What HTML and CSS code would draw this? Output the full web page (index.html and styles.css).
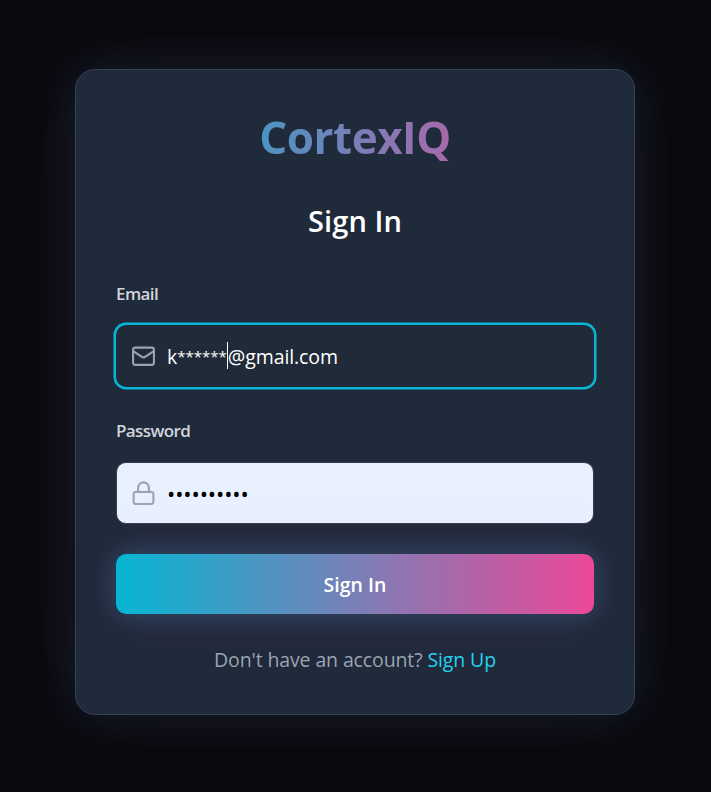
FILE: index.html
```html
<!DOCTYPE html>
<html lang="en">
<head>
  <meta charset="UTF-8" />
  <title>CortexIQ - Sign In</title>
  <link rel="stylesheet" href="styles.css">
</head>
<body>
  <main class="card">
    <h1 class="brand"><span>CortexIQ</span></h1>
    <h2 class="heading"><span>Sign In</span></h2>

    <div class="label">Email</div>
    <div class="field focused">
      <svg class="icon" viewBox="0 0 24 24">
        <rect x="2" y="3.5" width="20" height="16.5" rx="2" />
        <path d="m2.5 7 7.6 5.2a3.4 3.4 0 0 0 3.8 0L21.5 7" />
      </svg>
      <div class="value"><span>k<span class="stars">******</span></span><span class="caret"></span><span class="domain">@gmail.com</span></div>
    </div>

    <div class="label">Password</div>
    <div class="field filled">
      <svg class="icon" viewBox="0 0 24 24">
        <rect x="2.5" y="10.5" width="19" height="11.5" rx="2" />
        <path d="M6.8 10.5V6.5a5.2 5.2 0 0 1 10.4 0v4" />
      </svg>
      <div class="dots">••••••••••</div>
    </div>

    <button class="submit"><span>Sign In</span></button>
    <p class="footer"><span class="ask">Don't have an account?</span> <a class="link">Sign Up</a></p>
  </main>
</body>
</html>
```

FILE: styles.css
```css
* {
  box-sizing: border-box;
}

body {
  margin: 0;
  height: 792px;
  padding: 69px 76px 0 75px;
  background-color: #0a0a0f;
  color: #fff;
  font-family: 'Open Sans', 'Noto Sans', sans-serif;
  overflow: hidden;
}

.card {
  height: 646px;
  padding: 40px;
  border: 1px solid #374151;
  border-radius: 20px;
  background-color: #1f2a3b;
  box-shadow: 0 0 50px rgba(56, 170, 248, 0.12), 0 0 100px rgba(236, 72, 120, 0.06);
}

.brand {
  margin: 0 0 36px;
  line-height: 55px;
  font-size: 44px;
  font-weight: 700;
  letter-spacing: -0.5px;
  text-align: center;
  color: transparent;
  background: linear-gradient(to right, #06b6d4, #ec4899);
  -webkit-background-clip: text;
  background-clip: text;
}

.heading {
  margin: 0 0 40px;
  line-height: 40px;
  font-size: 29px;
  font-weight: 600;
  letter-spacing: 0.1px;
  text-align: center;
}

.label {
  margin-bottom: 19px;
  line-height: 25px;
  font-size: 17px;
  font-weight: 600;
  letter-spacing: -0.6px;
  color: #d1d5db;
}

.field {
  display: flex;
  align-items: center;
  height: 62px;
  margin-bottom: 31px;
  padding-left: 14px;
  border: 1px solid #374151;
  border-radius: 10px;
  background-color: #212a38;
}

.focused {
  border-color: transparent;
  box-shadow: 0 0 0 2.5px #06b6d4;
}

.filled {
  background-color: #e8f0fe;
  color: #000;
  margin-bottom: 30px;
}

.icon {
  width: 25px;
  height: 25px;
  margin-right: 11px;
  fill: none;
  stroke: #9ca3af;
  stroke-width: 2;
  stroke-linecap: round;
  stroke-linejoin: round;
}

.value {
  display: flex;
  align-items: center;
  font-size: 19.5px;
}

.stars {
  font-size: 15px;
  line-height: 1;
  vertical-align: 2px;
}

.domain {
  letter-spacing: -0.1px;
}

.caret {
  width: 1px;
  height: 27px;
  margin-top: -1px;
  background-color: #fff;
}

.dots {
  font-size: 22px;
  letter-spacing: -0.1px;
}

.submit {
  display: block;
  width: 100%;
  height: 60px;
  padding: 0;
  border: 0;
  border-radius: 10px;
  background: linear-gradient(to right, #06b6d4, #ec4899);
  box-shadow: 0 0 25px rgba(56, 150, 200, 0.35), 0 0 60px rgba(236, 72, 153, 0.13);
  color: #fff;
  font-family: inherit;
  font-size: 19.5px;
  font-weight: 600;
}

.footer {
  margin: 32px 0 0;
  line-height: 28px;
  font-size: 19.5px;
  letter-spacing: -0.12px;
  text-align: center;
  color: #9ca3af;
}

.link {
  color: #22d3ee;
}
```
